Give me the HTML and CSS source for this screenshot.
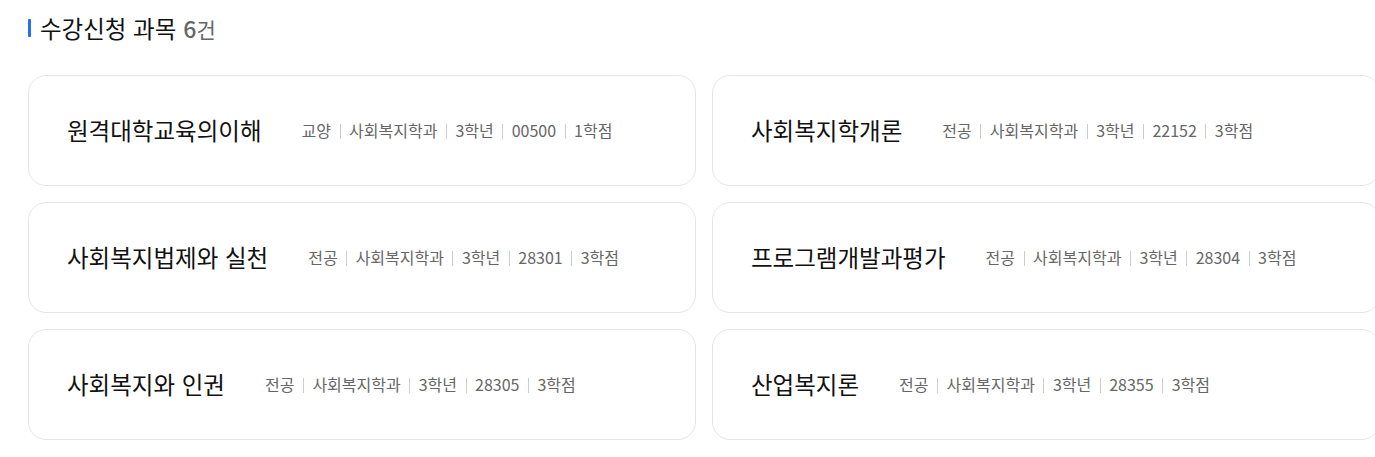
FILE: index.html
```html
<!DOCTYPE html>
<html lang="ko">
<head>
<meta charset="utf-8">
<link rel="stylesheet" href="styles.css">
</head>
<body>
<section class="wrap">
  <h2 class="title"><span class="bar"></span>수강신청 과목 <span class="count"><b>6</b>건</span></h2>
  <div class="grid">
    <div class="card"><span class="name">원격대학교육의이해</span><span class="meta"><span>교양</span><span>사회복지학과</span><span>3학년</span><span>00500</span><span>1학점</span></span></div>
    <div class="card"><span class="name">사회복지학개론</span><span class="meta"><span>전공</span><span>사회복지학과</span><span>3학년</span><span>22152</span><span>3학점</span></span></div>
    <div class="card"><span class="name">사회복지법제와 실천</span><span class="meta"><span>전공</span><span>사회복지학과</span><span>3학년</span><span>28301</span><span>3학점</span></span></div>
    <div class="card"><span class="name">프로그램개발과평가</span><span class="meta"><span>전공</span><span>사회복지학과</span><span>3학년</span><span>28304</span><span>3학점</span></span></div>
    <div class="card"><span class="name">사회복지와 인권</span><span class="meta"><span>전공</span><span>사회복지학과</span><span>3학년</span><span>28305</span><span>3학점</span></span></div>
    <div class="card"><span class="name">산업복지론</span><span class="meta"><span>전공</span><span>사회복지학과</span><span>3학년</span><span>28355</span><span>3학점</span></span></div>
  </div>
</section>
</body>
</html>
```
FILE: styles.css
```css
html, body {
  margin: 0;
  padding: 0;
  background: #fff;
  overflow: hidden;
}
body {
  font-family: "Noto Sans CJK KR", "Noto Sans", sans-serif;
  color: #111;
}
.wrap {
  padding: 14px 0 0 28px;
  width: 1352px;
}
.title {
  display: flex;
  align-items: center;
  margin: 0;
  height: 28px;
  font-size: 23.5px;
  font-weight: 400;
  color: #111;
}
.bar {
  display: inline-block;
  width: 3px;
  height: 18px;
  background: #2570f0;
  border-radius: 1px;
  margin-right: 9px;
}
.count {
  color: #666;
  margin-left: 7px;
  font-size: 21px;
}
.count b {
  font-weight: 500;
  font-size: 23px;
}
.grid {
  margin-top: 33px;
  display: grid;
  grid-template-columns: 668px 668px;
  gap: 16px;
}
.card {
  height: 111px;
  box-sizing: border-box;
  border: 1px solid #e6e6e6;
  border-radius: 18px;
  display: flex;
  align-items: center;
  padding: 0 0 2px 38px;
}
.name {
  font-size: 23.5px;
  color: #111;
  margin-right: 40px;
}
.meta {
  display: flex;
  align-items: center;
  font-size: 16px;
  color: #666;
}
.meta span + span::before {
  content: "";
  display: inline-block;
  width: 1px;
  height: 15px;
  background: #ccc;
  margin: 0 8.5px;
  vertical-align: -2px;
}
```
